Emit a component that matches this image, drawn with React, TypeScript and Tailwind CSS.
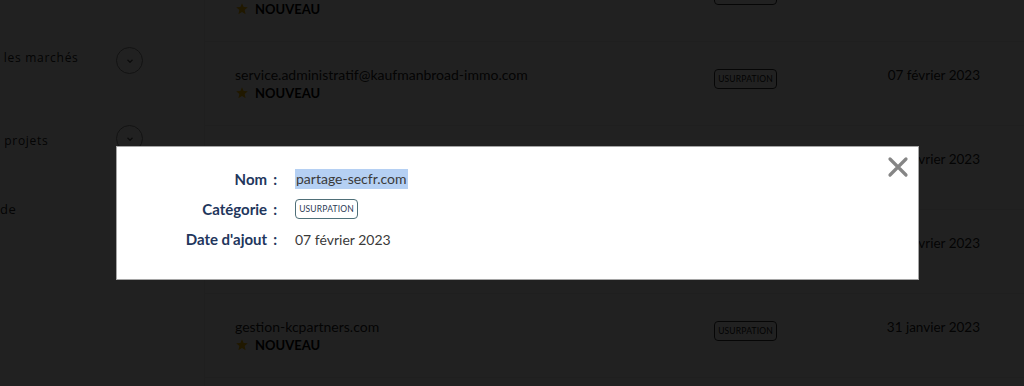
import React from 'react';

interface Row {
  domain: string;
  isNew: boolean;
  date: string;
}

const rows: Row[] = [
  { domain: 'contact@kaufmanbroad-immo.com', isNew: true, date: '07 février 2023' },
  { domain: 'service.administratif@kaufmanbroad-immo.com', isNew: true, date: '07 février 2023' },
  { domain: 'partage-secfr.com', isNew: true, date: '07 février 2023' },
  { domain: 'kaufmanbroad-immo.com', isNew: true, date: '07 février 2023' },
  { domain: 'gestion-kcpartners.com', isNew: true, date: '31 janvier 2023' },
];

const Star = () => (
  <svg className="w-[14px] h-[14px]" viewBox="0 0 24 24" fill="#f2b705">
    <path d="M12 2l2.9 6.6 7.1.6-5.4 4.7 1.6 7.1L12 17.3 5.8 21l1.6-7.1L2 9.2l7.1-.6z" />
  </svg>
);

const Chevron = () => (
  <div className="w-[27px] h-[27px] rounded-full border border-[#8a8a8a] flex items-center justify-center">
    <svg className="w-[10px] h-[10px]" viewBox="0 0 12 12" fill="none" stroke="#555" strokeWidth={1.6}>
      <path d="M3 4.5l3 3 3-3" />
    </svg>
  </div>
);

const Badge = ({ tone }: { tone: 'page' | 'modal' }) => (
  <span
    className={
      tone === 'modal'
        ? 'inline-flex items-center justify-center w-[63px] h-[20px] rounded-[4px] border border-[#4f6f78] text-[8.5px] text-[#2b3a55] tracking-[0.02em]'
        : 'inline-flex items-center justify-center w-[63px] h-[20px] rounded-[4px] border border-[#333] text-[8.5px] text-[#111] tracking-[0.02em]'
    }
  >
    USURPATION
  </span>
);

const Label = ({ children }: { children: string }) => (
  <div className="h-[20px] flex items-center justify-end font-bold text-[15px] text-[#22365c]">
    {children}
    <span className="ml-[6px]">:</span>
  </div>
);

export default function App() {
  return (
    <div className="relative w-[1024px] h-[386px] overflow-hidden bg-white font-['Lato',sans-serif]">
      {/* page sous le modal */}
      <div className="flex h-full">
        {/* menu */}
        <aside className="w-[205px] shrink-0 border-r border-[#ececec] overflow-hidden font-['Open_Sans',sans-serif] text-[12px] tracking-[0.06em] text-[#222]">
          <div className="flex items-center justify-between h-[27px] mt-[47px] pr-[61px]">
            <span className="-ml-[39px] whitespace-nowrap -mt-[6px]">Suivre les marchés</span>
            <Chevron />
          </div>
          <div className="flex items-center justify-between h-[27px] mt-[51px] pr-[61px]">
            <span className="-ml-[25px] whitespace-nowrap mt-[4px]">Mes projets</span>
            <Chevron />
          </div>
          <div className="h-[18px] mt-[48px]">
            <span className="-ml-[13px] whitespace-nowrap text-[13px]">Aide</span>
          </div>
        </aside>

        {/* liste */}
        <main className="flex-1 -mt-[42px]">
          {rows.map((row, i) => (
            <div
              key={i}
              className="grid grid-cols-[479px_172px_1fr] items-start h-[84px] pt-[24px] pl-[30px] pr-[44px] border-b border-[#ececec] text-[14px] text-[#222]"
            >
              <div>
                <div className="leading-[18px] whitespace-nowrap">{row.domain}</div>
                {row.isNew && (
                  <div className="flex items-center gap-[6px] leading-[18px] font-bold text-[13px] text-[#000]">
                    <Star />
                    NOUVEAU
                  </div>
                )}
              </div>
              <div>
                <Badge tone="page" />
              </div>
              <div className="text-right leading-[18px] whitespace-nowrap text-[13.5px]">{row.date}</div>
            </div>
          ))}
        </main>
      </div>

      {/* voile */}
      <div className="absolute inset-0 bg-[rgba(0,0,0,0.87)]" />

      {/* modal */}
      <div className="absolute left-[116px] top-[146px] w-[803px] h-[134px] bg-white border border-[#a5a5a5]">
        <button className="absolute right-[9px] top-[9px] w-[22px] h-[22px]">
          <svg viewBox="0 0 22 22" className="w-[22px] h-[22px]" stroke="#858585" strokeWidth={3.2} strokeLinecap="round">
            <path d="M3 3l16 16M19 3L3 19" />
          </svg>
        </button>
        <div className="grid grid-cols-[160px_1fr] gap-x-[18px] gap-y-[10px] pt-[22px] text-[14px]">
          <Label>Nom</Label>
          <div className="h-[20px] flex items-center">
            <span className="bg-[#b5d0f3] text-[#3a3a3a] leading-[20px] px-[1px]">partage-secfr.com</span>
          </div>
          <Label>Catégorie</Label>
          <div className="h-[20px] flex items-center">
            <Badge tone="modal" />
          </div>
          <Label>Date d'ajout</Label>
          <div className="h-[20px] flex items-center text-[#3a3a3a]">07 février 2023</div>
        </div>
      </div>
    </div>
  );
}
